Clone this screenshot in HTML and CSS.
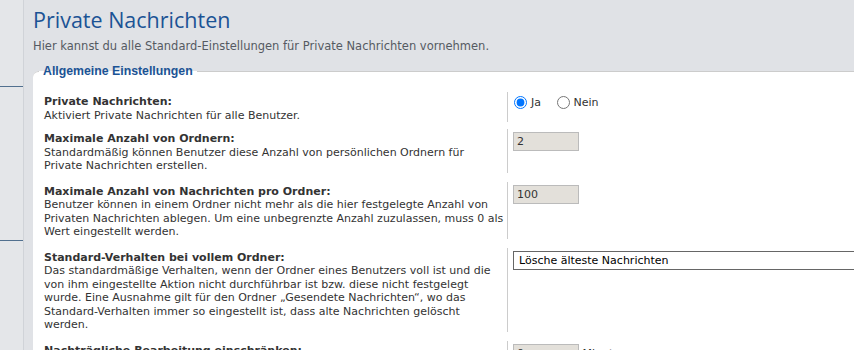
FILE: index.html
```html
<!DOCTYPE html>
<html lang="de">
<head>
    <meta charset="UTF-8">
    <title>Private Nachrichten</title>
    <link rel="stylesheet" href="styles.css">
</head>
<body>
    <div class="page">
        <div class="menu">
            <div class="menu-item"></div>
            <div class="menu-item"></div>
        </div>
        <div class="main">
            <h1>Private Nachrichten</h1>
            <p class="intro">Hier kannst du alle Standard-Einstellungen für Private Nachrichten vornehmen.</p>

            <fieldset>
                <legend>Allgemeine Einstellungen</legend>
                <dl class="first">
                    <dt><label>Private Nachrichten:</label><br><span>Aktiviert Private Nachrichten für alle Benutzer.</span></dt>
                    <dd>
                        <label class="radio"><input type="radio" name="allow_privmsg" checked> Ja</label>
                        <label class="radio"><input type="radio" name="allow_privmsg"> Nein</label>
                    </dd>
                </dl>
                <dl>
                    <dt><label>Maximale Anzahl von Ordnern:</label><br><span>Standardmäßig können Benutzer diese Anzahl von persönlichen Ordnern für Private Nachrichten erstellen.</span></dt>
                    <dd><input type="number" class="num" value="2"></dd>
                </dl>
                <dl>
                    <dt><label>Maximale Anzahl von Nachrichten pro Ordner:</label><br><span>Benutzer können in einem Ordner nicht mehr als die hier festgelegte Anzahl von Privaten Nachrichten ablegen. Um eine unbegrenzte Anzahl zuzulassen, muss 0 als Wert eingestellt werden.</span></dt>
                    <dd><input type="number" class="num" value="100"></dd>
                </dl>
                <dl>
                    <dt><label>Standard-Verhalten bei vollem Ordner:</label><br><span>Das standardmäßige Verhalten, wenn der Ordner eines Benutzers voll ist und die von ihm eingestellte Aktion nicht durchführbar ist bzw. diese nicht festgelegt wurde. Eine Ausnahme gilt für den Ordner „Gesendete Nachrichten“, wo das Standard-Verhalten immer so eingestellt ist, dass alte Nachrichten gelöscht werden.</span></dt>
                    <dd><select><option>Lösche älteste Nachrichten</option></select></dd>
                </dl>
                <dl>
                    <dt><label>Nachträgliche Bearbeitung einschränken:</label><br><span>Begrenzt die Zeit, in der Private Nachrichten bearbeitet werden können.</span></dt>
                    <dd><input type="number" class="num" value="0"> Minuten</dd>
                </dl>
            </fieldset>
        </div>
    </div>
</body>
</html>
```

FILE: styles.css
```css
body {
    margin: 0;
    background-color: #e0e2e6;
    font-family: "DejaVu Sans", Verdana, sans-serif;
    font-size: 11px;
    color: #333;
    overflow: hidden;
}
.page {
    display: flex;
    width: 1100px;
}
.menu {
    width: 23px;
    flex-shrink: 0;
    border-right: 1px solid #d0d3d8;
    background-color: #e4e6e9;
    min-height: 350px;
    padding-top: 86px;
}
.menu-item {
    height: 153px;
    border-top: 1px solid #51708f;
}
.main {
    flex: 1;
    padding-left: 9px;
}
h1 {
    margin: 0;
    padding-top: 5px;
    font-family: "Open Sans", sans-serif;
    font-weight: normal;
    font-size: 21.5px;
    line-height: 30px;
    color: #1b5395;
}
.intro {
    margin: 4px 0 0;
    font-size: 11.5px;
    line-height: 14px;
    color: #555a62;
}
fieldset {
    margin: 11px 0 0;
    padding: 14px 0 0;
    border: none;
    border-top: 1px solid #ccc;
    border-top-left-radius: 6px;
    background-color: #fff;
    min-height: 300px;
}
legend {
    margin-left: 6px;
    padding: 0 4px;
    font-family: "Liberation Sans", Arial, sans-serif;
    font-weight: bold;
    font-size: 12.3px;
    color: #1b5395;
}
dl {
    display: flex;
    margin: 0 0 9px;
}
dl.first {
    margin-bottom: 7px;
}
dt {
    width: 463px;
    flex-shrink: 0;
    padding: 3px 0 0 11px;
    box-sizing: content-box;
    line-height: 13.5px;
}
dt span {
    display: inline-block;
    width: 460px;
}
dt label {
    font-weight: bold;
}
dd {
    margin: 0;
    padding-left: 5px;
    border-left: 1px solid #ccc;
    flex: 1;
}
.radio {
    display: inline-flex;
    align-items: center;
    margin-right: 11px;
    padding-top: 4px;
}
.radio input {
    margin: 0 4px 0 1px;
    width: 13px;
    height: 13px;
}
.num {
    width: 66px;
    height: 19px;
    box-sizing: border-box;
    margin: 3px 0 0;
    padding: 1px 3px;
    border: 1px solid #bbb;
    background-color: #e3e0da;
    font-family: "DejaVu Sans", Verdana, sans-serif;
    font-size: 11px;
    color: #333;
    -moz-appearance: textfield;
}
.num::-webkit-inner-spin-button {
    -webkit-appearance: none;
}
select {
    width: 400px;
    height: 19px;
    margin-top: 3px;
    padding: 0 5px;
    border: 1px solid #666;
    background-color: #fff;
    font-family: "DejaVu Sans", Verdana, sans-serif;
    font-size: 11px;
    color: #000;
    appearance: none;
}
```
